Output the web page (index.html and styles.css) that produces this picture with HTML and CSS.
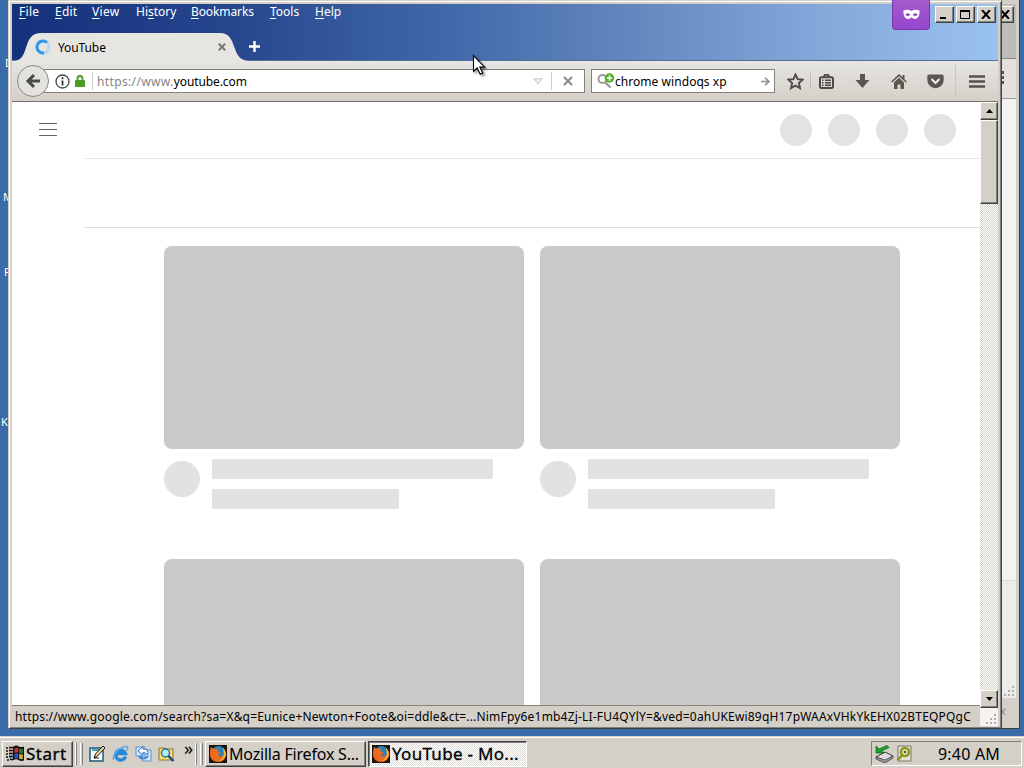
FILE: index.html
```
<!DOCTYPE html>
<html lang="en">
<head>
    <meta charset="UTF-8">
    <meta name="viewport" content="width=device-width, initial-scale=1.0">
    <title>YouTube - Mozilla Firefox</title>
    <link rel="stylesheet" href="styles.css">
</head>
<body>
<div class="desktop">
    <span class="desk-label label-d">D</span>
    <span class="desk-label label-m">M</span>
    <span class="desk-label label-p">P</span>
    <span class="desk-label label-k">K</span>

    <!-- window behind -->
    <div class="back-window">
        <div class="back-title"><span class="win-btn"><svg width="10" height="9" viewBox="0 0 10 9"><path d="M1 0l8 9M9 0L1 9" stroke="#000" stroke-width="2"/></svg></span></div>
        <div class="back-toolbar"><svg width="3" height="13" viewBox="0 0 3 13"><path d="M0 0h2v3H0zM0 5h2v3H0zM0 10h2v3H0z" fill="#555"/></svg></div>
        <div class="back-page"><div class="back-footer"><i class="grip"></i></div></div>
        <div class="back-status">‹</div>
    </div>

    <div class="window">
        <div class="titlebar">
            <div class="menubar">
                <span class="m-file"><u>F</u>ile</span>
                <span class="m-edit"><u>E</u>dit</span>
                <span class="m-view"><u>V</u>iew</span>
                <span class="m-history">Hi<u>s</u>tory</span>
                <span class="m-bookmarks"><u>B</u>ookmarks</span>
                <span class="m-tools"><u>T</u>ools</span>
                <span class="m-help"><u>H</u>elp</span>
            </div>
            <div class="tabs">
                <div class="tab">
                    <svg class="tab-shape" width="237" height="29" viewBox="0 0 237 29"><path d="M0 29v-1C18 28 8 0 28 0H207C226 0 216 28 237 28v1z" fill="#e7e5e2"/></svg>
                    <svg class="spinner" width="16" height="16" viewBox="0 0 16 16"><circle cx="8" cy="8" r="6" fill="none" stroke="#b9d8f2" stroke-width="3"/><path d="M12 3.500A6 6 0 1 0 9 13.900" fill="none" stroke="#3297e8" stroke-width="3"/></svg>
                    <span class="tab-title">YouTube</span>
                    <svg class="tab-close" width="8" height="8" viewBox="0 0 8 8"><path d="M.8.8l6.400 6.400M7.200.8L.8 7.200" stroke="#777" stroke-width="2"/></svg>
                </div>
                <svg class="new-tab" width="11" height="11" viewBox="0 0 11 11"><path d="M5.500 0v11M0 5.500h11" stroke="#fff" stroke-width="2.400"/></svg>
            </div>
            <div class="private"><svg width="17" height="11" viewBox="0 0 17 11"><path d="M.5 1.500C3 .2 6 .6 8.500 2 11 .6 14 .2 16.500 1.500 17 6 15 10 12 10c-2 0-2.500-1.500-3.500-1.500S7 10 5 10C2 10 0 6 .5 1.500z" fill="#fff"/><path d="M2.700 5.700q2-2.400 4.200 0-2 2-4.200 0M10.100 5.700q2.200-2.400 4.200 0-2.200 2-4.200 0" fill="#9347c0" stroke="#9347c0" stroke-width=".8"/></svg></div>
            <div class="win-buttons">
                <span class="win-btn"><svg width="10" height="9" viewBox="0 0 10 9"><path d="M1 8h6" stroke="#000" stroke-width="2"/></svg></span>
                <span class="win-btn"><svg width="10" height="9" viewBox="0 0 10 9"><path d="M0 1h10" stroke="#000" stroke-width="2"/><path d="M.5 0v8.500h9V0" fill="none" stroke="#000"/></svg></span>
                <span class="win-btn"><svg width="10" height="9" viewBox="0 0 10 9"><path d="M1 0l8 9M9 0L1 9" stroke="#000" stroke-width="2"/></svg></span>
            </div>
        </div>

        <div class="navbar">
            <div class="back-btn"><svg width="16" height="16" viewBox="0 0 16 16"><path d="M15 8H4M9 2L3 8l6 6" fill="none" stroke="#4b4945" stroke-width="3"/></svg></div>
            <div class="urlbar">
                <svg class="info" width="15" height="15" viewBox="0 0 15 15"><circle cx="7.500" cy="7.500" r="6.500" fill="none" stroke="#444" stroke-width="1.300"/><path d="M7.500 6.500v5M7.500 3.200v2" stroke="#333" stroke-width="1.800"/></svg>
                <svg class="lock" width="10" height="12" viewBox="0 0 10 12"><path d="M2.500 6V3.500a2.500 2.500 0 0 1 5 0V6" fill="none" stroke="#4d9a28" stroke-width="1.800"/><rect y="5" width="10" height="7" rx="1" fill="#4d9a28"/></svg>
                <i class="url-sep"></i>
                <span class="url"><span class="dim">https://www.</span>youtube.com</span>
                <svg class="drop" width="10" height="7" viewBox="0 0 10 7"><path d="M.8.8h8.400L5 5.800z" fill="#eee" stroke="#c5c5c5"/></svg>
                <i class="url-sep right"></i>
                <svg class="stop" width="10" height="10" viewBox="0 0 10 10"><path d="M1 1l8 8M9 1L1 9" stroke="#888" stroke-width="2"/></svg>
            </div>
            <div class="search">
                <svg width="18" height="16" viewBox="0 0 18 16"><circle cx="5.500" cy="6" r="4" fill="none" stroke="#999" stroke-width="2"/><path d="M8.500 9.500l5 5" stroke="#999" stroke-width="2.400"/><circle cx="12.500" cy="5" r="4.700" fill="#54ad2c"/><path d="M12.500 2.300v5.400M9.800 5h5.400" stroke="#fff" stroke-width="1.500"/></svg>
                <span class="search-text">chrome windoqs xp</span>
                <svg width="9" height="9" viewBox="0 0 9 9"><path d="M0 4.500h7M4 .8l4 3.700-4 3.700" fill="none" stroke="#8793a0" stroke-width="1.700"/></svg>
            </div>
            <svg class="tool star" width="17" height="17" viewBox="0 0 17 17"><path d="M8.500 1.500l2.100 4.700 5.100.5-3.800 3.400 1.100 5.100-4.500-2.700L4 15.200l1.100-5.100L1.300 6.700l5.100-.5z" fill="none" stroke="#4d4a45" stroke-width="1.900"/></svg>
            <i class="tool-sep"></i>
            <svg class="tool clip" width="15" height="15" viewBox="0 0 15 15"><path d="M5 3q0-2.500 2.500-2.500T10 3" fill="none" stroke="#4d4a45" stroke-width="1.800"/><rect x="1" y="3.200" width="13" height="10.800" rx="1.500" fill="none" stroke="#4d4a45" stroke-width="2"/><path d="M3 6.200h1.500M6 6.200h6M3 8.700h1.500M6 8.700h6M3 11.200h1.500M6 11.200h6" stroke="#4d4a45" stroke-width="1.500"/></svg>
            <svg class="tool down" width="15" height="14" viewBox="0 0 15 14"><path d="M5 0h5v6h4.500l-7 8-7-8H5z" fill="#5a5751"/></svg>
            <svg class="tool home" width="16" height="15" viewBox="0 0 16 15"><path d="M.7 8L8 1.200 15.300 8" fill="none" stroke="#5a5751" stroke-width="1.700"/><path d="M11.500 1h2v4h-2zM8 3.800l5 4.700V15H9.500v-4.500h-3V15H3V8.500z" fill="#5a5751"/></svg>
            <svg class="tool pocket" width="17" height="15" viewBox="0 0 17 15"><path d="M2 .5h13q1.700 0 1.700 1.700v3.800a8.200 8.200 0 0 1-16.400 0V2.200Q.3.500 2 .5z" fill="#5a5751"/><path d="M4.500 5l4 4 4-4" fill="none" stroke="#efede9" stroke-width="2"/></svg>
            <i class="tool-sep tall"></i>
            <svg class="tool burger" width="16" height="13" viewBox="0 0 16 13"><path d="M0 1.500h16M0 6.500h16M0 11.500h16" stroke="#55524d" stroke-width="2.500"/></svg>
        </div>

        <div class="content">
            <div class="page">
                <svg class="guide" width="19" height="14" viewBox="0 0 19 14"><path d="M0 1.500h18M0 7.500h18M0 13.500h18" stroke="#62626a"/></svg>
                <div class="masthead"><i></i><i></i><i></i><i></i></div>
                <div class="chips"></div>
                <div class="grid">
                    <div class="video">
                        <div class="thumb"></div>
                        <div class="details"><i class="avatar"></i><div><div class="line"></div><div class="line short"></div></div></div>
                    </div>
                    <div class="video">
                        <div class="thumb"></div>
                        <div class="details"><i class="avatar"></i><div><div class="line"></div><div class="line short"></div></div></div>
                    </div>
                    <div class="video"><div class="thumb"></div></div>
                    <div class="video"><div class="thumb"></div></div>
                </div>
            </div>
            <div class="scrollbar">
                <span class="scroll-btn"><svg width="7" height="4" viewBox="0 0 7 4"><path d="M3.500 0L7 4H0z"/></svg></span>
                <span class="scroll-thumb"></span>
                <span class="scroll-btn last"><svg width="7" height="4" viewBox="0 0 7 4"><path d="M0 0h7L3.500 4z"/></svg></span>
            </div>
        </div>
        <div class="status">
            <span class="status-text">https://www.google.com/search?sa=X&amp;q=Eunice+Newton+Foote&amp;oi=ddle&amp;ct=...NimFpy6e1mb4Zj-LI-FU4QYlY=&amp;ved=0ahUKEwi89qH17pWAAxVHkYkEHX02BTEQPQgC</span>
            <span class="resizer"><i class="grip"></i></span>
        </div>
    </div>

    <div class="taskbar">
        <div class="start">
            <svg width="19" height="17" viewBox="0 0 19 17"><path d="M7 2q3-2.500 6-.5 2 1 5 0v14q-3 1-5-.3-3-1.800-6 .3z" fill="#111"/><path d="M8.500 3.500q2-1.400 3.800-.5v4.700q-2-.8-3.800.3z" fill="#c4312a"/><path d="M13.200 3.400q1.800.8 3.600.3v4.700q-1.800.4-3.600-.3z" fill="#2d7f35"/><path d="M8.500 9q2-1.200 3.800-.3v4.800q-2-.8-3.800.3z" fill="#2d51b9"/><path d="M13.200 9q1.800.8 3.600.3V14q-1.800.4-3.600-.3z" fill="#d2b02d"/><path d="M0 3h2M3 2.500h4M0 6h2M3 5.500h4M0 9h2M3 8.500h4M0 12h2M3 11.500h4M1 15h2M4 14.500h3" stroke="#111" stroke-width="1.600"/><path d="M3 7h3M3 4h3" stroke="#d44"/><path d="M3 10h3M3 13h3" stroke="#36c"/></svg>
            <span>Start</span>
        </div>
        <i class="handle first"></i><i class="handle"></i>
        <div class="quick">
            <svg width="17" height="17" viewBox="0 0 17 17"><rect x="1" y="3" width="13" height="13" fill="#fff" stroke="#27627a" stroke-width="1.600"/><path d="M3 4h10v2H3z" fill="#47a3c5"/><path d="M5 13l1.500-4L14 1l2 2-7.500 8z" fill="#f1d991" stroke="#111"/><path d="M5 13h5" stroke="#111"/></svg>
            <svg width="17" height="17" viewBox="0 0 17 17"><path d="M13.500 11.500A5 5 0 1 1 13.500 8.500H5" fill="none" stroke="#2489dc" stroke-width="3.400"/><path d="M2 14.500C-1 12 7 2 14 1.500q3 0 1 4" fill="none" stroke="#54a8e8" stroke-width="1.500"/></svg>
            <svg width="17" height="17" viewBox="0 0 17 17"><path d="M1 2h9v9H1zM7 5h9v11H7z" fill="#cfe7fa" stroke="#5d93d0"/><path d="M3 6l5-4.500V4q6.500 0 4.500 6Q11 7.500 8 7.500V10z" fill="#fff" stroke="#286ec3"/><path d="M4 11q4 5 9 0" fill="none" stroke="#3b82d8" stroke-width="2.200"/></svg>
            <svg width="17" height="17" viewBox="0 0 17 17"><path d="M1 3h6l1 1h7v11H1z" fill="#f7df72" stroke="#8e7726"/><circle cx="7.500" cy="8" r="4" fill="#b8edfa" stroke="#276b9c" stroke-width="1.400"/><path d="M10.500 11l5 5" stroke="#153c8a" stroke-width="2.200"/></svg>
        </div>
        <span class="more">»</span>
        <i class="handle second"></i><i class="handle"></i>
        <div class="task">
            <svg class="fox" width="18" height="18" viewBox="0 0 18 18"><path d="M0 0h18v18H0z" fill="#1d1410"/><circle cx="9.500" cy="8" r="7" fill="#2384b9"/><path d="M2 2l3 2q3-1 5 0L8 6l4 2-3 2q2 3 5 0 2-3 0-7 4 3 3 8-2 6-8 6-7 0-8-7-.3-4 1-8z" fill="#ee6a20"/><path d="M14 3q4 4 2 9-2 4-6 4 5-3 5-7z" fill="#fbb838"/></svg>
            <span>Mozilla Firefox S...</span>
        </div>
        <div class="task active">
            <svg class="fox" width="18" height="18" viewBox="0 0 18 18"><path d="M0 0h18v18H0z" fill="#1d1410"/><circle cx="9.500" cy="8" r="7" fill="#2384b9"/><path d="M2 2l3 2q3-1 5 0L8 6l4 2-3 2q2 3 5 0 2-3 0-7 4 3 3 8-2 6-8 6-7 0-8-7-.3-4 1-8z" fill="#ee6a20"/><path d="M14 3q4 4 2 9-2 4-6 4 5-3 5-7z" fill="#fbb838"/></svg>
            <span>YouTube - Mo...</span>
        </div>
        <div class="tray">
            <svg width="19" height="18" viewBox="0 0 19 18"><path d="M1 12l9-5 8 4-8 6z" fill="#ddd" stroke="#333"/><path d="M1 12v2l9 4 8-5v-2l-8 4z" fill="#999" stroke="#333" stroke-width=".7"/><path d="M1 1v7h8L6.500 6 14 2.500 12 .5 4 4z" fill="#18a52c" stroke="#075d14" stroke-width=".7"/></svg>
            <svg width="17" height="17" viewBox="0 0 17 17"><path d="M2 1h13v15H2z" fill="#e3e2d5" stroke="#77776c"/><circle cx="9" cy="7" r="4" fill="none" stroke="#929821" stroke-width="2.700"/><path d="M6.500 10l-5 5" stroke="#929821" stroke-width="2.500"/><circle cx="9" cy="7" r="1.300" fill="#636817"/></svg>
            <span class="clock">9:40 AM</span>
        </div>
    </div>

    <svg class="cursor" width="14" height="22" viewBox="0 0 14 22"><path d="M1.500 1.500v16l3.700-3.500 3 6.300 2.600-1.200-3-6h4.900z" fill="#fff" stroke="#000" stroke-width="1.100"/></svg>
</div>
</body>
</html>
```
FILE: styles.css
```
* {
    box-sizing: border-box;
}
body {
    margin: 0;
    font-family: "Noto Sans", "Open Sans", sans-serif;
    font-size: 12px;
    color: #000;
}
svg {
    display: block;
    flex: none;
}
.desktop {
    position: relative;
    width: 1024px;
    height: 768px;
    overflow: hidden;
    background: #396ca8;
}
.desk-label {
    position: absolute;
    color: #fff;
    font-size: 11px;
    line-height: 14px;
}
.label-d { left: 5px; top: 56px; }
.label-m { left: 3px; top: 190px; }
.label-p { left: 4px; top: 265px; }
.label-k { left: 1px; top: 415px; }

/* window behind */
.back-window {
    position: absolute;
    left: 990px;
    top: 0;
    width: 30px;
    height: 729px;
    background: #d4d0c8;
    border-right: 1px solid #404040;
    border-bottom: 1px solid #404040;
    padding: 4px 3px 0 0;
}
.back-title {
    height: 54px;
    background: #bcbcbc;
    display: flex;
    justify-content: flex-end;
    align-items: flex-start;
    padding: 2px 2px 0 0;
}
.back-toolbar {
    height: 41px;
    background: #e4e1dc;
    border-top: 1px solid #888;
    border-bottom: 1px solid #999;
    padding: 12px 0 0 12px;
}
.back-page {
    height: 599px;
    background: #f3f3f3;
    display: flex;
    align-items: flex-end;
}
.back-footer {
    width: 100%;
    height: 118px;
    background: #ececec;
    border-top: 1px solid #ddd;
    display: flex;
    justify-content: flex-end;
    align-items: flex-end;
    padding: 1px;
}
.back-status {
    color: #888;
    padding-left: 11px;
    line-height: 24px;
    font-size: 16px;
}
.grip {
    width: 12px;
    height: 12px;
    background-image: radial-gradient(circle, #b0aeaa 1.300px, transparent 1.500px);
    background-size: 4px 4px;
    clip-path: polygon(100% 0, 100% 100%, 0 100%, 0 66%, 33% 66%, 33% 33%, 66% 33%, 66% 0);
}

/* main window */
.window {
    position: absolute;
    left: 8px;
    top: 0;
    width: 994px;
    height: 729px;
    background: #d4d0c8;
    border: 1px solid #d4d0c8;
    border-right-color: #404040;
    border-bottom-color: #404040;
    box-shadow: inset 1px 1px 0 #fff, inset -1px -1px 0 #808080;
    padding: 3px 3px 0;
}
.titlebar {
    position: relative;
    height: 57px;
    background: linear-gradient(90deg, #14317c 0%, #26468e 22%, #4269aa 45%, #6388bf 63%, #83a8da 82%, #9ac2f0 100%);
    border-bottom: 1px solid #54709c;
}
.menubar {
    height: 29px;
    display: flex;
    padding-left: 7px;
    color: #fff;
    line-height: 16px;
}
.menubar u {
    text-underline-offset: 2px;
}
.m-file { width: 36px; letter-spacing: .3px; }
.m-edit { width: 37px; letter-spacing: .2px; }
.m-view { width: 44px; letter-spacing: .3px; }
.m-history { width: 55px; }
.m-bookmarks { width: 79px; letter-spacing: -.1px; }
.m-tools { width: 45px; }
.tabs {
    display: flex;
    height: 28px;
}
.tab {
    position: relative;
    width: 238px;
    height: 28px;
    display: flex;
    align-items: center;
    padding-left: 23px;
}
.tab-shape {
    position: absolute;
    left: 1px;
    top: 0;
}
.spinner,
.tab-title,
.tab-close {
    position: relative;
}
.tab-title {
    margin-left: 7px;
    width: 160px;
    letter-spacing: -.1px;
}
.new-tab {
    margin: 8px 0 0 -1px;
}
.private {
    position: absolute;
    left: 880px;
    top: -4px;
    width: 38px;
    height: 30px;
    border-radius: 0 0 4px 4px;
    background: linear-gradient(#a45acb, #9647ce);
    border: 1px solid #7b39a8;
    border-top: 0;
    padding: 9px 0 0 10px;
}
.win-buttons {
    position: absolute;
    right: 2px;
    top: 2px;
    display: flex;
    gap: 2px;
}
.win-btn {
    width: 19px;
    height: 17px;
    display: flex;
    flex: none;
    align-items: center;
    justify-content: center;
    background: #d4d0c8;
    border: 1px solid #fff;
    border-right-color: #404040;
    border-bottom-color: #404040;
    box-shadow: inset -1px -1px 0 #808080;
}
.win-buttons .win-btn {
    padding-right: 2px;
}
.navbar {
    height: 41px;
    display: flex;
    align-items: center;
    background: linear-gradient(#e7e5e2, #d4d0c8);
    border-bottom: 1px solid #77736d;
    padding-left: 5px;
}
.back-btn {
    width: 32px;
    height: 32px;
    flex: none;
    border: 1px solid #8b8985;
    border-radius: 50%;
    background: #e4e2df;
    display: flex;
    align-items: center;
    justify-content: center;
    position: relative;
    z-index: 1;
}
.urlbar {
    width: 541px;
    height: 24px;
    margin-left: -5px;
    border: 1px solid #85827d;
    background: #fff;
    display: flex;
    align-items: center;
    padding-left: 10px;
}
.lock {
    margin-left: 5px;
}
.url-sep {
    width: 1px;
    height: 18px;
    background: #ccc;
    margin: 0 4px 0 7px;
}
.url {
    width: 436px;
    letter-spacing: -.1px;
}
.dim {
    color: #858585;
    letter-spacing: .36px;
}
.url-sep.right {
    margin: 0 11px 0 8px;
}
.search {
    width: 184px;
    height: 24px;
    margin-left: 6px;
    border: 1px solid #85827d;
    background: #fff;
    display: flex;
    align-items: center;
    padding-left: 5px;
}
.search-text {
    width: 146px;
    letter-spacing: .05px;
}
.star { margin-left: 12px; }
.clip { margin-left: 8px; }
.down { margin-left: 21px; }
.home { margin-left: 21px; }
.pocket { margin-left: 20px; }
.burger { margin-left: 13px; }
.tool-sep {
    width: 1px;
    height: 16px;
    background: #bbb8b3;
    margin-left: 6px;
}
.tool-sep.tall {
    height: 32px;
    background: #c9c6c1;
    margin-left: 11px;
}

.content {
    height: 603px;
    display: flex;
    background: #fff;
}
.page {
    width: 968px;
    height: 603px;
    overflow: hidden;
    display: grid;
    grid-template-columns: 73px 895px;
    grid-template-rows: 57px 69px auto;
}
.guide {
    margin: 20px 0 0 27px;
}
.masthead {
    display: flex;
    justify-content: flex-end;
    gap: 16px;
    padding: 12px 24px 0 0;
    border-bottom: 1px solid #e4e4e4;
}
.masthead i {
    width: 32px;
    height: 32px;
    border-radius: 50%;
    background: #e3e3e3;
}
.chips {
    grid-column: 2;
    border-bottom: 1px solid #ddd;
}
.grid {
    grid-column: 2;
    display: grid;
    grid-template-columns: 360px 360px;
    grid-template-rows: 313px 313px;
    column-gap: 16px;
    padding: 18px 0 0 79px;
}
.thumb {
    height: 203px;
    border-radius: 8px;
    background: #cacaca;
}
.details {
    display: flex;
    gap: 12px;
    padding-top: 10px;
}
.avatar {
    width: 36px;
    height: 36px;
    margin-top: 2px;
    border-radius: 50%;
    background: #e2e2e2;
}
.line {
    width: 281px;
    height: 20px;
    border-radius: 2px;
    background: #e2e2e2;
    margin-bottom: 10px;
}
.line.short {
    width: 187px;
}
.scrollbar {
    width: 18px;
    height: 606px;
    display: flex;
    flex-direction: column;
    position: relative;
    z-index: 1;
    background: repeating-conic-gradient(#d4d0c8 0 25%, #fff 0 50%) 0 0 / 2px 2px;
}
.scroll-btn,
.scroll-thumb {
    height: 18px;
    background: #d4d0c8;
    border: 1px solid #fff;
    border-right-color: #404040;
    border-bottom-color: #404040;
    box-shadow: inset -1px -1px 0 #808080;
    display: flex;
    align-items: center;
    justify-content: center;
}
.scroll-thumb {
    height: 84px;
}
.scroll-btn.last {
    margin-top: auto;
}
.status {
    height: 22px;
    display: flex;
    border-top: 1px solid #85827d;
}
.status-text {
    width: 968px;
    padding-left: 3px;
    line-height: 22px;
    white-space: nowrap;
    letter-spacing: .19px;
}
.resizer {
    width: 18px;
    height: 20px;
    background: #f4f3f1;
    display: flex;
    justify-content: flex-end;
    align-items: flex-end;
    padding: 1px;
}

.taskbar {
    position: absolute;
    left: 0;
    top: 737px;
    width: 1024px;
    height: 31px;
    background: #d4d0c8;
    border-top: 1px solid #fff;
    box-shadow: 0 -1px 0 #d4d0c8;
    display: flex;
    align-items: center;
    font-size: 16px;
    padding: 1px 2px 0;
}
.start {
    width: 71px;
    height: 26px;
    border: 1px solid #fff;
    border-right-color: #404040;
    border-bottom-color: #404040;
    box-shadow: inset -1px -1px 0 #808080;
    display: flex;
    align-items: center;
    padding-left: 3px;
    gap: 1px;
    font-size: 17px;
    letter-spacing: .5px;
    -webkit-text-stroke: .3px #000;
}
.handle {
    width: 3px;
    height: 22px;
    border-left: 1px solid #fff;
    border-right: 1px solid #808080;
    margin-left: 3px;
}
.handle.first {
    margin-left: 2px;
    width: 2px;
}
.quick {
    display: flex;
    gap: 6px;
    margin-left: 6px;
}
.more {
    width: 10px;
    margin-left: 9px;
    margin-top: -12px;
    font-size: 18px;
}
.handle.second {
    margin-left: 1px;
    width: 2px;
}
.task {
    width: 161px;
    height: 26px;
    margin-left: 2px;
    border: 1px solid #fff;
    border-right-color: #404040;
    border-bottom-color: #404040;
    box-shadow: inset -1px -1px 0 #808080;
    display: flex;
    align-items: center;
    padding-left: 3px;
    gap: 2px;
    white-space: nowrap;
    letter-spacing: -.2px;
}
.task.active {
    width: 159px;
    border-color: #404040 #fff #fff #404040;
    box-shadow: inset 1px 1px 0 #808080;
    background: repeating-conic-gradient(#dedbd6 0 25%, #fff 0 50%) 0 0 / 2px 2px;
    font-size: 17px;
    letter-spacing: .3px;
    -webkit-text-stroke: .3px #000;
}
.tray {
    width: 151px;
    height: 25px;
    margin-left: auto;
    border: 1px solid #808080;
    border-right-color: #fff;
    border-bottom-color: #fff;
    display: flex;
    align-items: center;
    padding-left: 3px;
    gap: 2px;
}
.clock {
    margin-left: 23px;
    letter-spacing: .2px;
}
.cursor {
    position: absolute;
    left: 472px;
    top: 54px;
    filter: drop-shadow(2px 2px 1px rgba(0, 0, 0, .4));
}
```
